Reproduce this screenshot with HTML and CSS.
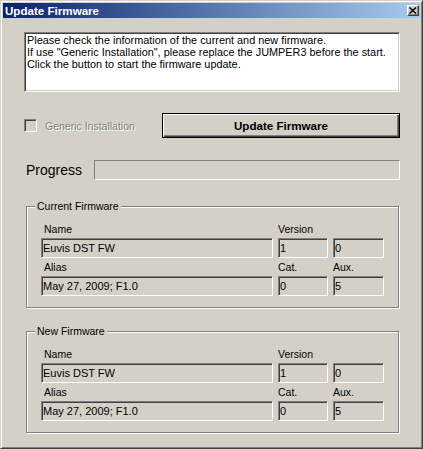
FILE: index.html
```html
<!DOCTYPE html>
<html lang="en">
  <head>
    <meta charset="UTF-8" />
    <meta name="viewport" content="width=device-width, initial-scale=1.0" />

    <title>Update Firmware</title>

    <link rel="stylesheet" href="styles.css">
  </head>

  <body>
    <div class="window">
      <div class="titlebar">
        <span class="title">Update Firmware</span>
        <button class="close" aria-label="Close">
          <svg width="8" height="7" viewBox="0 0 8 7">
            <path d="M0.5 0.5 L7 6.5 M7 0.5 L0.5 6.5" stroke="#000" stroke-width="1.5" fill="none" />
          </svg>
        </button>
      </div>

      <div class="content">
        <div class="message">
          Please check the information of the current and new firmware.<br>
          If use "Generic Installation", please replace the JUMPER3 before the start.<br>
          Click the button to start the firmware update.
        </div>

        <div class="actions">
          <label class="check">
            <span class="box"></span>
            <span class="check-label">Generic Installation</span>
          </label>
          <button class="btn-default">Update Firmware</button>
        </div>

        <div class="progress-row">
          <span class="progress-label">Progress</span>
          <div class="progress"></div>
        </div>

        <div class="group">
          <span class="legend">Current Firmware</span>
          <div class="fields">
            <span class="lbl">Name</span>
            <span class="lbl small wide">Version</span>
            <div class="field">Euvis DST FW</div>
            <div class="field">1</div>
            <div class="field">0</div>
            <span class="lbl">Alias</span>
            <span class="lbl small">Cat.</span>
            <span class="lbl small">Aux.</span>
            <div class="field">May 27, 2009; F1.0</div>
            <div class="field">0</div>
            <div class="field">5</div>
          </div>
        </div>

        <div class="group second">
          <span class="legend">New Firmware</span>
          <div class="fields">
            <span class="lbl">Name</span>
            <span class="lbl small wide">Version</span>
            <div class="field">Euvis DST FW</div>
            <div class="field">1</div>
            <div class="field">0</div>
            <span class="lbl">Alias</span>
            <span class="lbl small">Cat.</span>
            <span class="lbl small">Aux.</span>
            <div class="field">May 27, 2009; F1.0</div>
            <div class="field">0</div>
            <div class="field">5</div>
          </div>
        </div>
      </div>
    </div>
  </body>
</html>
```

FILE: styles.css
```css
*,
*::before,
*::after {
  box-sizing: border-box;
}

body {
  margin: 0;
  background-color: #d4d0c8;
}

.window {
  width: 423px;
  height: 449px;
  padding: 2px;
  background-color: #d4d0c8;
  border: 1px solid;
  border-color: #d4d0c8 #404040 #404040 #d4d0c8;
  box-shadow: inset 1px 1px #fff, inset -1px -1px #808080;
  font-family: "Liberation Sans", Arial, sans-serif;
  font-size: 11px;
  color: #000;
}

/* title bar */

.titlebar {
  height: 15px;
  padding: 0 1px 0 2px;
  display: flex;
  align-items: center;
  justify-content: space-between;
  background: linear-gradient(to right, #0a246a, #a6caf0);
}

.title {
  color: #fff;
  font-weight: bold;
  font-size: 11.6px;
}

.close {
  width: 12px;
  height: 11px;
  padding: 0;
  display: flex;
  align-items: center;
  justify-content: center;
  background-color: #d4d0c8;
  border: 1px solid;
  border-color: #fff #404040 #404040 #fff;
  box-shadow: inset -1px -1px #808080;
}

/* body */

.content {
  padding: 14px 20px 0 21px;
}

.message {
  height: 60px;
  padding: 1px 2px;
  line-height: 12px;
  font-size: 10.9px;
  background-color: #fff;
  border: 1px solid;
  border-color: #808080 #fff #fff #808080;
  box-shadow: inset 1px 1px #404040, inset -1px -1px #d4d0c8;
}

.actions {
  margin-top: 21px;
  height: 25px;
  display: flex;
  align-items: center;
  justify-content: space-between;
}

.check {
  display: flex;
  align-items: center;
}

.box {
  width: 13px;
  height: 13px;
  background-color: #d4d0c8;
  border: 1px solid;
  border-color: #808080 #fff #fff #808080;
  box-shadow: inset 1px 1px #404040, inset -1px -1px #d4d0c8;
}

.check-label {
  margin-left: 8px;
  font-size: 10.5px;
  color: #808080;
  text-shadow: 1px 1px 0 #fff;
}

.btn-default {
  width: 238px;
  height: 25px;
  padding: 0;
  font-family: inherit;
  font-size: 11.6px;
  font-weight: bold;
  color: #000;
  background-color: #d4d0c8;
  border: 1px solid #000;
  box-shadow: inset 1px 1px #fff, inset -1px -1px #404040, inset -2px -2px #808080;
}

.progress-row {
  margin-top: 22px;
  display: flex;
  align-items: center;
}

.progress-label {
  margin-left: 2px;
  font-size: 14px;
}

.progress {
  margin-left: auto;
  width: 306px;
  height: 20px;
  border: 1px solid;
  border-color: #808080 #fff #fff #808080;
}

/* group boxes */

.group {
  position: relative;
  width: 373px;
  margin: 26px 0 0 2px;
  padding: 13px 0 11px 14px;
  border: 1px solid #808080;
  box-shadow: inset 1px 1px #fff, 1px 1px #fff;
}

.group.second {
  margin-top: 23px;
}

.legend {
  position: absolute;
  left: 8px;
  top: -7px;
  padding: 0 2px;
  font-size: 10.5px;
  line-height: 13px;
  background-color: #d4d0c8;
}

.fields {
  display: grid;
  grid-template-columns: 232px 50px 51px;
  grid-template-rows: 18px 20px 18px 20px;
  column-gap: 5px;
}

.lbl {
  padding-left: 3px;
  font-size: 10.5px;
  line-height: 18px;
}

.lbl.small {
  padding-left: 0;
}

.lbl.wide {
  grid-column: span 2;
}

.field {
  height: 20px;
  padding-left: 1px;
  line-height: 18px;
  border: 1px solid;
  border-color: #808080 #fff #fff #808080;
  box-shadow: inset 1px 1px #404040, inset -1px -1px #d4d0c8;
}
```
